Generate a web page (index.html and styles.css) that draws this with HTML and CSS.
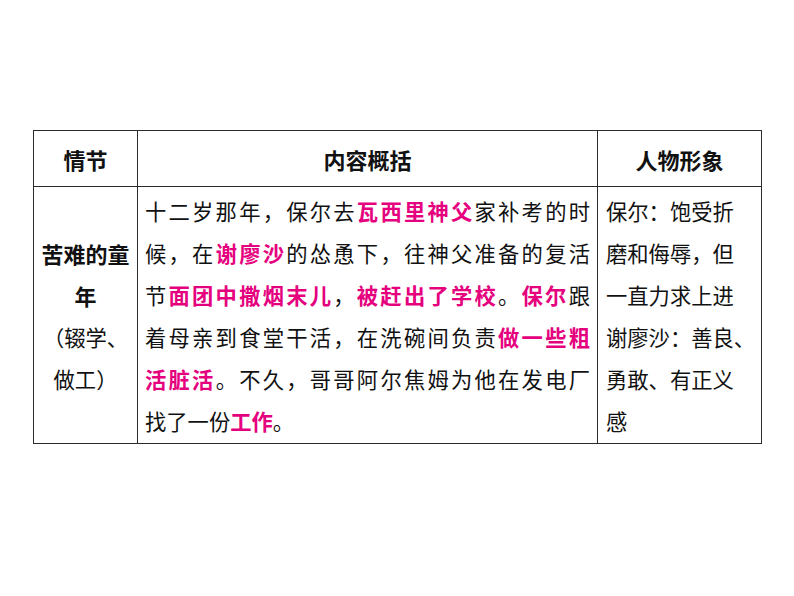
FILE: index.html
```html
<!DOCTYPE html>
<html lang="zh-CN">
<head>
<meta charset="utf-8">
<title>苦难的童年</title>
<link rel="stylesheet" href="styles.css">
</head>
<body>
<div class="page">
  <table class="plot">
    <colgroup>
      <col class="c1">
      <col class="c2">
      <col class="c3">
    </colgroup>
    <thead>
      <tr>
        <th>情节</th>
        <th>内容概括</th>
        <th>人物形象</th>
      </tr>
    </thead>
    <tbody>
      <tr>
        <td class="stage">
          <span class="b">苦难的童</span>
          <span class="b">年</span>
          <span>（辍学、</span>
          <span>做工）</span>
        </td>
        <td class="summary">
          <span class="ln">十二岁那年，保尔去<em>瓦西里神父</em>家补考的时</span>
          <span class="ln">候，在<em>谢廖沙</em>的怂恿下，往神父准备的复活</span>
          <span class="ln">节<em>面团中撒烟末儿</em>，<em>被赶出了学校</em>。<em>保尔</em>跟</span>
          <span class="ln">着母亲到食堂干活，在洗碗间负责<em>做一些粗</em></span>
          <span class="ln"><em>活脏活</em>。不久，哥哥阿尔焦姆为他在发电厂</span>
          <span class="ln last">找了一份<em>工作</em>。</span>
        </td>
        <td class="figure">
          <span class="ln">保尔：饱受折</span>
          <span class="ln">磨和侮辱，但</span>
          <span class="ln">一直力求上进</span>
          <span class="ln">谢廖沙：善良、</span>
          <span class="ln">勇敢、有正义</span>
          <span class="ln">感</span>
        </td>
      </tr>
    </tbody>
  </table>
</div>
</body>
</html>
```
FILE: styles.css
```css
html, body {
  margin: 0;
  padding: 0;
  background: #ffffff;
}

body {
  font-family: "Noto Sans CJK SC", "Noto Sans", sans-serif;
  color: #111111;
  text-spacing-trim: space-all;
}

.page {
  padding: 130px 0 0 33px;
}

.plot {
  border-collapse: collapse;
  table-layout: fixed;
  width: 728px;
}

.plot .c1 { width: 104px; }
.plot .c2 { width: 460px; }
.plot .c3 { width: 164px; }

.plot th,
.plot td {
  border: 1px solid #2a2a2a;
}

.plot th {
  height: 55px;
  padding: 0;
  font-size: 22px;
  font-weight: 700;
  text-align: center;
  vertical-align: middle;
  line-height: 1;
}

.plot td {
  font-size: 21.3px;
  line-height: 42px;
  vertical-align: top;
  padding: 3px 0 1px;
  height: 251px;
  box-sizing: border-box;
}

.ln {
  display: block;
  white-space: nowrap;
}

.stage {
  text-align: center;
  vertical-align: middle !important;
}

.stage span {
  display: block;
  white-space: nowrap;
}

.stage .b {
  font-weight: 700;
  font-size: 22px;
}

.summary {
  padding-left: 7px !important;
  padding-right: 7px !important;
}

.summary .ln {
  text-align: justify;
  text-align-last: justify;
}

.summary .ln.last {
  text-align-last: left;
}

.summary em {
  font-style: normal;
  font-weight: 700;
  color: #e5007e;
}

.figure {
  padding-left: 8px !important;
}
```
